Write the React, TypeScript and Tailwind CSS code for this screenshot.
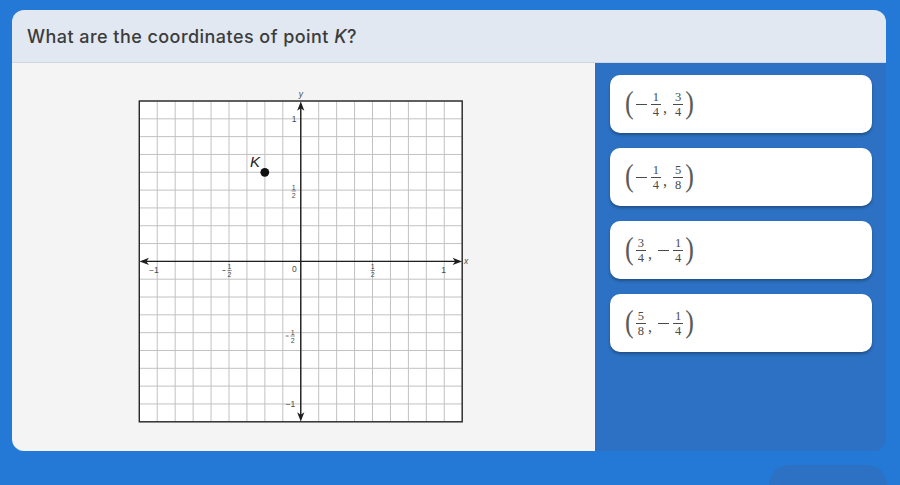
import React from 'react';

const cols = Array.from({ length: 19 }, (_, i) => 138.3 + i * 17.94);
const rows = Array.from({ length: 19 }, (_, j) => 101 + j * 17.82);
const AX = cols[9];
const AY = rows[9];

function SvgFrac({ x, y, n, neg }: { x: number; y: number; n: string; neg?: boolean }) {
  return (
    <g fill="#4a4a4a" fontSize="7" fontFamily="Liberation Sans, Arial, sans-serif" textAnchor="middle">
      {neg && <line x1={x - 7} y1={y} x2={x - 4} y2={y} stroke="#4a4a4a" strokeWidth="0.8" />}
      <text x={x} y={y - 1.5}>{n}</text>
      <line x1={x - 2.2} y1={y} x2={x + 2.2} y2={y} stroke="#4a4a4a" strokeWidth="0.6" />
      <text x={x} y={y + 6.5}>2</text>
    </g>
  );
}

function Graph() {
  return (
    <svg width="340" height="340" viewBox="133 88 340 340">
      <rect x={138.3} y={101} width={322.9} height={320.8} fill="#ffffff" />
      {cols.map((x, i) => (
        <line key={'c' + i} x1={x} y1={101} x2={x} y2={421.8} stroke="#c2c2c2" strokeWidth="1" />
      ))}
      {rows.map((y, j) => (
        <line key={'r' + j} x1={138.3} y1={y} x2={461.2} y2={y} stroke="#c2c2c2" strokeWidth="1" />
      ))}
      <rect x={138.3} y={101} width={322.9} height={320.8} fill="none" stroke="#2a2a2a" strokeWidth="1.4" />

      {/* axes */}
      <line x1={141} y1={AY} x2={458} y2={AY} stroke="#1e1e1e" strokeWidth="1.4" />
      <line x1={AX} y1={104} x2={AX} y2={419} stroke="#1e1e1e" strokeWidth="1.4" />
      <path d={`M138.6 ${AY} L148 ${AY - 3.6} L145.4 ${AY} L148 ${AY + 3.6} Z`} fill="#1e1e1e" />
      <path d={`M461 ${AY} L451.6 ${AY - 3.6} L454.2 ${AY} L451.6 ${AY + 3.6} Z`} fill="#1e1e1e" />
      <path d={`M${AX} 101.5 L${AX - 3.6} 110.8 L${AX} 108.2 L${AX + 3.6} 110.8 Z`} fill="#1e1e1e" />
      <path d={`M${AX} 421.5 L${AX - 3.6} 412.2 L${AX} 414.8 L${AX + 3.6} 412.2 Z`} fill="#1e1e1e" />

      <g fill="#4a4a4a" fontSize="8.5" fontFamily="Liberation Sans, Arial, sans-serif" textAnchor="middle">
        <text x={AX} y={97} fontStyle="italic">y</text>
        <text x={465} y={AY + 3} fontStyle="italic">x</text>
        <text x={293} y={121.5}>1</text>
        <text x={293.3} y={272}>0</text>
        <text x={289.5} y={407}>−1</text>
        <text x={153} y={273}>−1</text>
        <text x={442.7} y={273}>1</text>
      </g>
      <SvgFrac x={292.7} y={191} n="1" />
      <SvgFrac x={291.7} y={336} n="1" neg />
      <SvgFrac x={228.5} y={270.5} n="1" neg />
      <SvgFrac x={371.7} y={270.5} n="1" />

      <circle cx={263.8} cy={172.3} r={4.4} fill="#111111" />
      <text x={254} y={167} fontSize="15" fontStyle="italic" fill="#222222" fontFamily="Liberation Sans, Arial, sans-serif" textAnchor="middle">K</text>
    </svg>
  );
}

function Frac({ n, d }: { n: string; d: string }) {
  return (
    <span className="inline-flex flex-col items-center text-[12.5px] leading-[11px] mx-[2px] relative top-[1px]">
      <span className="px-[2px] pb-[1px]">{n}</span>
      <span className="h-[0.8px] w-full bg-[#4a4a4a]" />
      <span className="pt-[2px]">{d}</span>
    </span>
  );
}

function Paren({ c }: { c: string }) {
  return <span className="text-[26px] leading-none text-[#5a5a5a] relative -top-[1px] scale-y-[1.2] inline-block">{c}</span>;
}

function Minus() {
  return <span className="inline-block w-[11px] h-[1px] bg-[#4a4a4a] mx-[2px]" />;
}

function Coord({ a, b }: { a: [boolean, string, string]; b: [boolean, string, string] }) {
  return (
    <span className="inline-flex items-center text-[#4a4a4a]" style={{ fontFamily: '"Liberation Serif", "DejaVu Serif", serif' }}>
      <Paren c="(" />
      {a[0] && <Minus />}
      <Frac n={a[1]} d={a[2]} />
      <span className="text-[16px] relative top-[4px] mr-[4px] leading-none">,</span>
      {b[0] && <Minus />}
      <Frac n={b[1]} d={b[2]} />
      <Paren c=")" />
    </span>
  );
}

const answers: { a: [boolean, string, string]; b: [boolean, string, string] }[] = [
  { a: [true, '1', '4'], b: [false, '3', '4'] },
  { a: [true, '1', '4'], b: [false, '5', '8'] },
  { a: [false, '3', '4'], b: [true, '1', '4'] },
  { a: [false, '5', '8'], b: [true, '1', '4'] },
];

export default function App() {
  return (
    <div className="w-[900px] h-[485px] overflow-hidden bg-[#2479d6] pt-[10px] pl-[12px] pr-[14px]" style={{ fontFamily: 'Inter, "Noto Sans", sans-serif' }}>
      <div className="flex flex-col h-[441px] rounded-[12px] overflow-hidden">
        <div className="h-[53px] shrink-0 bg-[#e1e8f2] border-b border-[#cfd6df] flex items-center pl-[15px]">
          <h1 className="text-[18px] font-medium text-[#3c3c3c] tracking-[0.45px]">
            What are the coordinates of point <i>K</i>?
          </h1>
        </div>
        <div className="flex flex-1">
          <div className="w-[583px] bg-[#f4f4f4] flex items-center justify-center pt-[1px]">
            <Graph />
          </div>
          <div className="flex-1 bg-[#2c71c3] pt-[12px] pl-[15px] pr-[14px] flex flex-col gap-[15px]">
            {answers.map((ans, i) => (
              <div key={i} className="h-[58px] bg-white rounded-[10px] shadow-[0_2px_3px_rgba(0,0,0,0.3)] flex items-center pl-[15px]">
                <Coord a={ans.a} b={ans.b} />
              </div>
            ))}
          </div>
        </div>
      </div>
      <div className="flex justify-end mt-[14px]">
        <div className="w-[118px] h-[40px] rounded-[20px] bg-[#2c71c3] -mr-[1px]" />
      </div>
    </div>
  );
}
